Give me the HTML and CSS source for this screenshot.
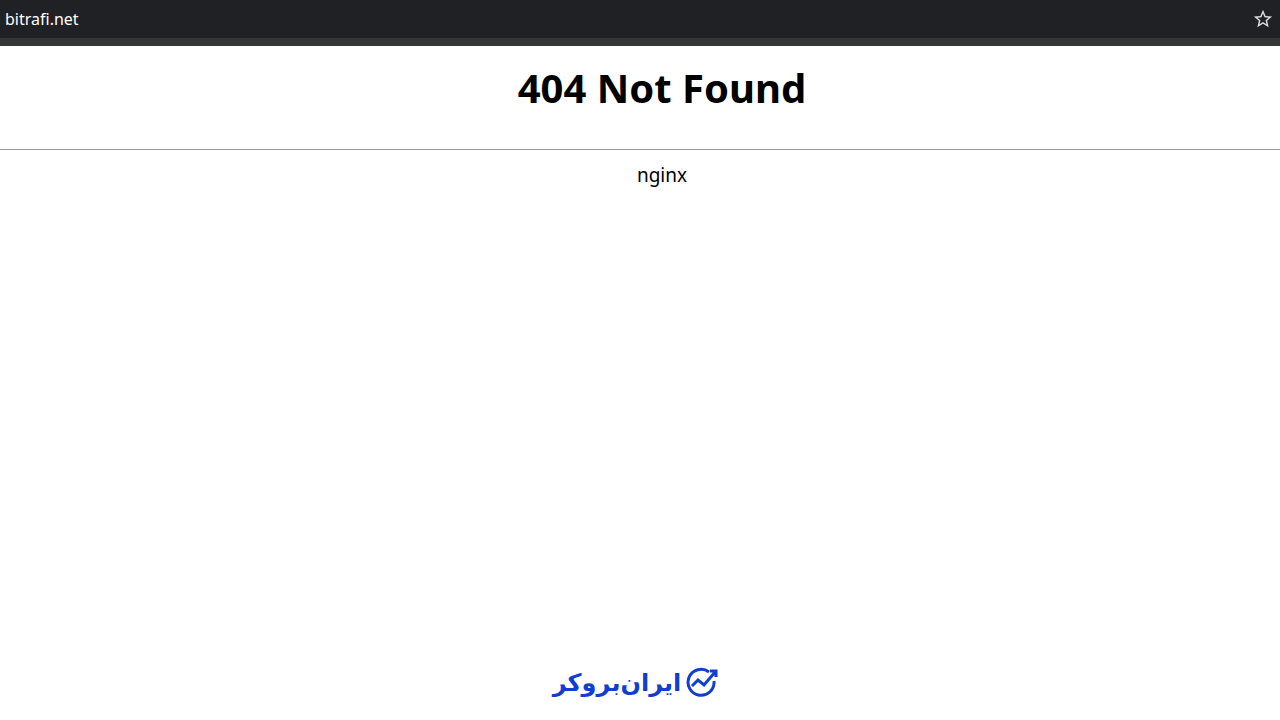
FILE: index.html
```
<!DOCTYPE html>
<html lang="en">
<head>
<meta charset="utf-8">
<title>404 Not Found</title>
<link rel="stylesheet" href="styles.css">
</head>
<body>
<header class="toolbar">
  <span class="address">bitrafi.net</span>
  <button class="bookmark" type="button" aria-label="Bookmark this page">
    <svg viewBox="0 0 24 24" width="22" height="22" aria-hidden="true"><path fill="currentColor" d="M22 9.24l-7.19-.62L12 2 9.19 8.63 2 9.24l5.46 4.73L5.82 21 12 17.27 18.18 21l-1.63-7.03L22 9.24zM12 15.4l-3.76 2.27 1-4.28-3.32-2.88 4.38-.38L12 6.1l1.71 4.04 4.38.38-3.32 2.88 1 4.28L12 15.4z"/></svg>
  </button>
</header>
<main class="page">
  <h1 class="title">404 Not Found</h1>
  <hr class="rule">
  <p class="server">nginx</p>
</main>
<footer class="brand">
  <span class="brand-name" lang="fa" dir="rtl">ایران‌بروکر</span>
  <svg class="brand-mark" viewBox="0 0 34 34" width="34" height="34" aria-hidden="true">
    <path d="M24 6A13 13 0 1 0 29 15M7 20l6-6 6 5L31 5M25 5h6v6" fill="none" stroke="currentColor" stroke-width="3"/>
  </svg>
</footer>
</body>
</html>
```
FILE: styles.css
```
body {
  margin: 0;
  min-height: 100vh;
  display: flex;
  flex-direction: column;
  background: #fff;
  color: #000;
  font-family: "Noto Sans", sans-serif;
}
.toolbar {
  display: flex;
  align-items: center;
  justify-content: space-between;
  height: 38px;
  padding: 0 6px 0 5px;
  background: #202124;
  border-bottom: 8px solid #353535;
  color: #fff;
}
.address { font-size: 16px; }
.bookmark {
  display: flex;
  padding: 0;
  border: 0;
  background: none;
  color: #dadce0;
}
.page { flex: 1; }
.title {
  margin: 14px 0 34px 44px;
  font-size: 40px;
  line-height: 55px;
  text-align: center;
}
.rule {
  margin: 0;
  border: 0;
  border-top: 1px solid #999;
}
.server {
  margin: 12px 0 0 44px;
  font-size: 19px;
  line-height: 26px;
  text-align: center;
}
.brand {
  display: flex;
  align-items: center;
  justify-content: center;
  gap: 4px;
  padding: 0 8px 20px 0;
  color: #103fd0;
}
.brand-name {
  font-family: "DejaVu Sans", sans-serif;
  font-weight: 700;
  font-size: 24px;
  line-height: 34px;
}
```
